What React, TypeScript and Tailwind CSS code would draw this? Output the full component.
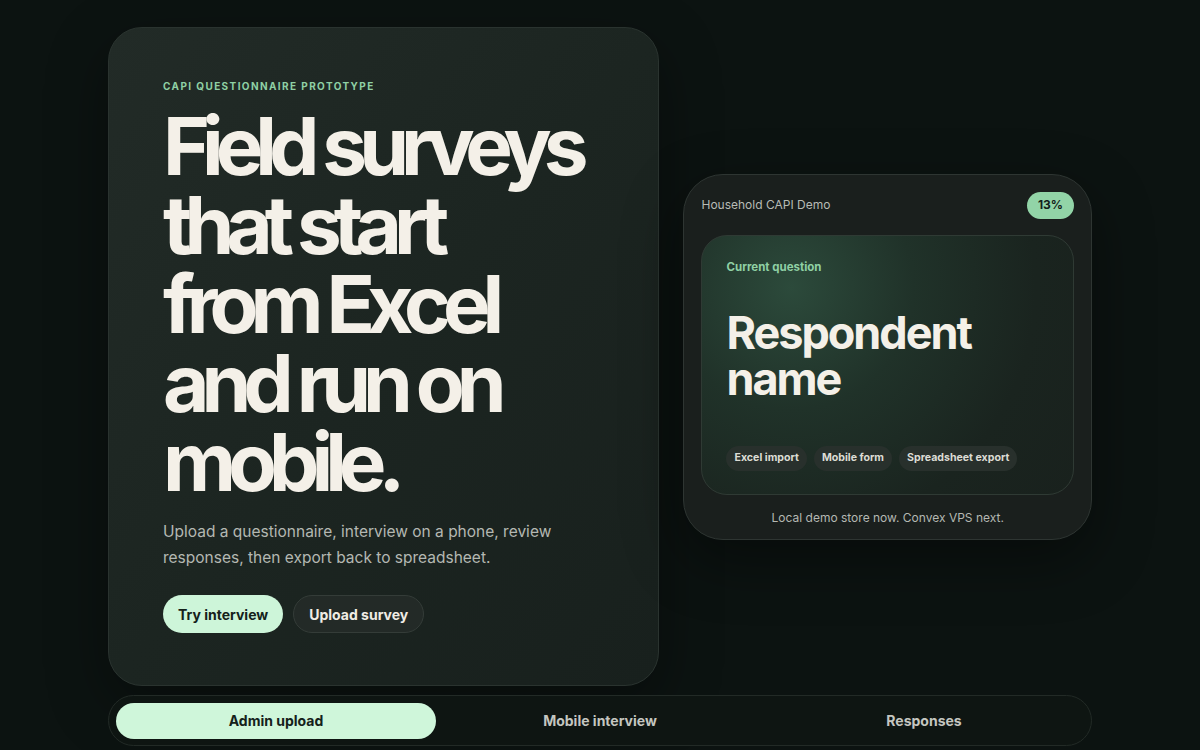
import React from "react";

export default function App() {
  return (
    <div
      className="min-h-[750px] w-full bg-[#0c1311] text-[#f3efe6]"
      style={{ fontFamily: "Inter, 'Noto Sans', sans-serif" }}
    >
      <div className="mx-auto flex w-[984px] flex-col gap-[9px] pt-[27px]">
        <div className="grid grid-cols-[1.35fr_1fr] items-center gap-6">
          {/* Left hero card */}
          <section className="flex h-[659px] flex-col rounded-[34px] border border-[#2a332f] bg-gradient-to-br from-[#222b27] via-[#1c2521] to-[#18201d] px-[54px] pt-[51px] shadow-[0_20px_60px_rgba(0,0,0,0.35)]">
            <p className="text-[10px] font-bold uppercase tracking-[0.14em] text-[#8fd0a4]">
              CAPI questionnaire prototype
            </p>
            <h1 className="mt-[12px] whitespace-nowrap text-[80px] font-bold leading-[79px] tracking-[-0.1em] text-[#f4f0e8]">
              Field surveys
              <br />
              that start
              <br />
              from Excel
              <br />
              and run on
              <br />
              mobile.
            </h1>
            <p className="mt-[18px] text-[15.5px] leading-[26px] text-[#b4b8b2]">
              Upload a questionnaire, interview on a phone, review
              <br />
              responses, then export back to spreadsheet.
            </p>
            <div className="mt-[24px] flex gap-[10px]">
              <button className="h-[38px] rounded-full bg-[#cdf5d9] px-[15px] text-[14px] font-bold text-[#14211a]">
                Try interview
              </button>
              <button className="h-[38px] rounded-full border border-[#343c38] bg-[#232a27] px-[15px] text-[14px] font-bold text-[#f0ece4]">
                Upload survey
              </button>
            </div>
          </section>

          {/* Right phone card */}
          <section className="flex h-[366px] flex-col rounded-[40px] border border-[#2e3532] bg-[#1a1f1d] px-[17px] pt-[17px] shadow-[0_20px_60px_rgba(0,0,0,0.4)]">
            <div className="flex items-center justify-between">
              <span className="text-[12px] text-[#b7bbb5]">Household CAPI Demo</span>
              <span className="flex h-[27px] items-center rounded-full bg-[#92d4a7] px-[11px] text-[12px] font-bold text-[#13201a]">
                13%
              </span>
            </div>
            <div className="mt-[16px] flex h-[260px] flex-col rounded-[26px] border border-[#2f3a34] bg-[radial-gradient(circle_at_24%_20%,#2c4a3b_0%,#203229_35%,#1a241f_70%,#19211d_100%)] px-[24px] pt-[23px]">
              <span className="text-[11.5px] font-bold text-[#8fd0a4]">Current question</span>
              <h2 className="mt-[34px] text-[45px] font-bold leading-[46px] tracking-[-0.045em] text-[#f4f0e8]">
                Respondent
                <br />
                name
              </h2>
              <div className="mt-[44px] flex gap-[7px]">
                <span className="flex h-[25px] items-center rounded-full bg-[#28302c] px-[8px] text-[10.6px] font-bold text-[#dcdcd4]">
                  Excel import
                </span>
                <span className="flex h-[25px] items-center rounded-full bg-[#28302c] px-[8px] text-[10.6px] font-bold text-[#dcdcd4]">
                  Mobile form
                </span>
                <span className="flex h-[25px] items-center rounded-full bg-[#28302c] px-[8px] text-[10.6px] font-bold text-[#dcdcd4]">
                  Spreadsheet export
                </span>
              </div>
            </div>
            <p className="mt-[14px] text-center text-[12px] text-[#b4b8b2]">
              Local demo store now. Convex VPS next.
            </p>
          </section>
        </div>

        {/* Bottom tabs */}
        <nav className="grid h-[51px] grid-cols-3 items-center gap-[4px] rounded-full border border-[#222a26] bg-[#0e1512] px-[7px]">
          <button className="h-[36px] rounded-full bg-[#cff6da] text-[14px] font-bold text-[#14211a]">
            Admin upload
          </button>
          <button className="h-[36px] rounded-full text-[14px] font-bold text-[#c4c6c0]">
            Mobile interview
          </button>
          <button className="h-[36px] rounded-full text-[14px] font-bold text-[#c4c6c0]">
            Responses
          </button>
        </nav>
      </div>
    </div>
  );
}
